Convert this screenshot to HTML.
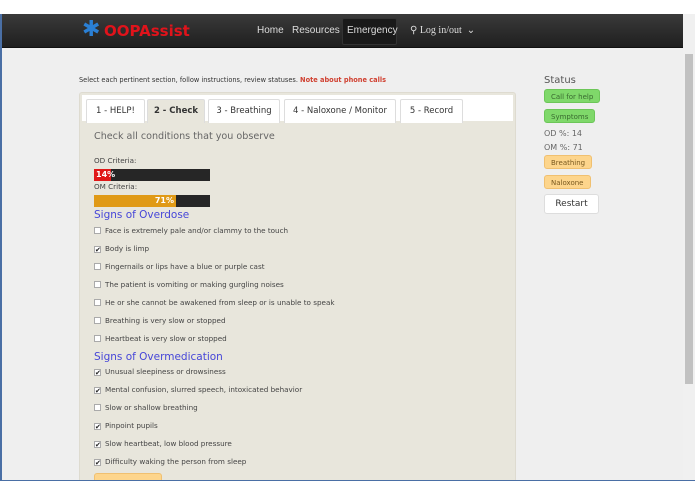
<!DOCTYPE html>
<html><head><style>
*{margin:0;padding:0;box-sizing:border-box}
body{width:695px;height:494px;background:#fff;font-family:"DejaVu Sans","Liberation Sans",sans-serif;position:relative;overflow:hidden}
#win{position:absolute;left:0;top:14px;width:695px;height:467px;background:#efefef;border-left:2px solid #4a6fa5;border-bottom:1px solid #4a6fa5;overflow:hidden}
#nav{position:absolute;left:0;top:0;width:683px;height:34px;background:linear-gradient(#3a3a3a,#1f1f1f);border-bottom:1px solid #111}
.logo{position:absolute;left:102px;top:8px;color:#e0131b;font-weight:bold;font-size:15px;font-family:"DejaVu Sans",sans-serif}
.star{position:absolute;left:80px;top:6px;color:#2a7fd4;font-size:22px;line-height:20px}
.nl{position:absolute;top:11px;color:#ddd;font-size:10px;font-family:"Liberation Sans",sans-serif}
#emer{position:absolute;left:340px;top:4px;width:55px;height:27px;background:#1a1a1a;border:1px solid #333;border-radius:2px}
#sb{position:absolute;right:0;top:0;width:12px;height:467px;background:#f0f0f0}
#sb div{position:absolute;left:2px;top:40px;width:8px;height:330px;background:#c1c1c1}
.intro{position:absolute;left:77px;top:62px;font-size:6.6px;color:#333}
.intro b{color:#d04030}
#panel{position:absolute;left:77px;top:78px;width:437px;height:400px;background:#e8e6dc;border:1px solid #dedbd0;border-radius:3px}
#tabs{position:absolute;left:2px;top:2px;width:431px;height:26px;background:#fff}
.tab{position:absolute;top:4px;height:24px;border:1px solid #ddd;border-bottom:none;background:#fff;font-size:8.5px;color:#333;text-align:center;line-height:22px;border-radius:2px 2px 0 0}
.tab.a{background:#e8e6dc;font-weight:bold}
.c{position:absolute;left:14px;font-size:7.2px;color:#444}
.h{position:absolute;left:14px;top:38px;font-size:9.6px;color:#666}
.bar{position:absolute;left:14px;width:116px;height:12px;background:#262626}
.bar div{height:12px;color:#fff;font-size:8px;font-weight:bold;line-height:12px}
.sec{position:absolute;left:14px;font-size:10.5px;color:#4646d8}
.cb{display:inline-block;width:7px;height:7px;border:1px solid #aaa;background:#fff;margin-right:4px;vertical-align:-1px;font-size:7px;line-height:6px;color:#222;text-align:center}
.st{position:absolute;left:542px;font-size:7px;border-radius:3px;padding:0 6px;height:14px;line-height:14px}
.g{background:#7fd86a;color:#3a6a30;border:1px solid #6cc658}
.o{background:#fdd58c;color:#7a5a20;border:1px solid #f0c070}
</style></head><body>
<div id="win">
<div id="nav">
<div class="star">✱</div><div class="logo">OOPAssist</div>
<div id="emer"></div>
<div class="nl" style="left:255px">Home</div>
<div class="nl" style="left:290px">Resources</div>
<div class="nl" style="left:345px">Emergency</div>
<div class="nl" style="left:408px;font-family:'Liberation Serif',serif">&#9906; Log in/out &nbsp;⌄</div>
</div>
<div id="sb"><div></div></div>
<div class="intro">Select each pertinent section, follow instructions, review statuses. <b>Note about phone calls</b></div>
<div id="panel">
<div id="tabs">
<div class="tab" style="left:4px;width:59px">1 - HELP!</div>
<div class="tab a" style="left:65px;width:58px">2 - Check</div>
<div class="tab" style="left:126px;width:72px">3 - Breathing</div>
<div class="tab" style="left:202px;width:112px">4 - Naloxone / Monitor</div>
<div class="tab" style="left:318px;width:63px">5 - Record</div>
</div>
<div class="h">Check all conditions that you observe</div>
<div class="c" style="top:63px">OD Criteria:</div>
<div class="bar" style="top:76px"><div style="width:17px;background:#e01818;padding-left:2px">14%</div></div>
<div class="c" style="top:89px">OM Criteria:</div>
<div class="bar" style="top:102px"><div style="width:82px;background:#e09a16;text-align:right;padding-right:2px">71%</div></div>
<div class="sec" style="top:116px">Signs of Overdose</div>
<div class="c" style="top:133px"><span class="cb"></span>Face is extremely pale and/or clammy to the touch</div>
<div class="c" style="top:151px"><span class="cb">✔</span>Body is limp</div>
<div class="c" style="top:169px"><span class="cb"></span>Fingernails or lips have a blue or purple cast</div>
<div class="c" style="top:187px"><span class="cb"></span>The patient is vomiting or making gurgling noises</div>
<div class="c" style="top:205px"><span class="cb"></span>He or she cannot be awakened from sleep or is unable to speak</div>
<div class="c" style="top:223px"><span class="cb"></span>Breathing is very slow or stopped</div>
<div class="c" style="top:241px"><span class="cb"></span>Heartbeat is very slow or stopped</div>
<div class="sec" style="top:258px">Signs of Overmedication</div>
<div class="c" style="top:274px"><span class="cb">✔</span>Unusual sleepiness or drowsiness</div>
<div class="c" style="top:292px"><span class="cb">✔</span>Mental confusion, slurred speech, intoxicated behavior</div>
<div class="c" style="top:310px"><span class="cb"></span>Slow or shallow breathing</div>
<div class="c" style="top:328px"><span class="cb">✔</span>Pinpoint pupils</div>
<div class="c" style="top:346px"><span class="cb">✔</span>Slow heartbeat, low blood pressure</div>
<div class="c" style="top:364px"><span class="cb">✔</span>Difficulty waking the person from sleep</div>
<div style="position:absolute;left:14px;top:380px;width:68px;height:20px;background:#fdd58c;border:1px solid #f0c070;border-radius:3px"></div>
</div>
<div style="position:absolute;left:542px;top:61px;font-size:10px;color:#555">Status</div>
<div class="st g" style="top:75px">Call for help</div>
<div class="st g" style="top:95px">Symptoms</div>
<div style="position:absolute;left:542px;top:115px;font-size:8px;color:#666">OD %: 14</div>
<div style="position:absolute;left:542px;top:129px;font-size:8px;color:#666">OM %: 71</div>
<div class="st o" style="top:141px">Breathing</div>
<div class="st o" style="top:161px">Naloxone</div>
<div style="position:absolute;left:542px;top:180px;width:55px;height:20px;background:#fff;border:1px solid #ddd;border-radius:3px;font-size:9px;color:#333;text-align:center;line-height:19px">Restart</div>
</div>
</body></html>
